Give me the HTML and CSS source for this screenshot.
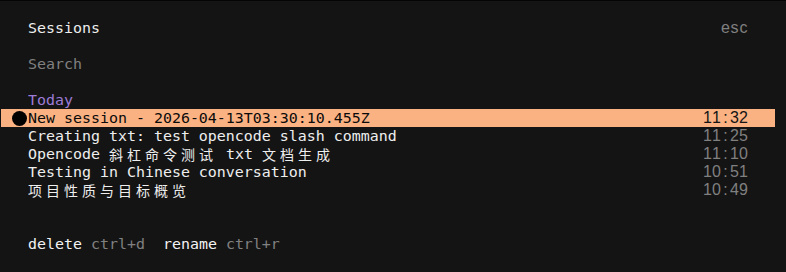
FILE: index.html
```html
<!DOCTYPE html>
<html>
<head>
<meta charset="utf-8">
<link rel="stylesheet" href="styles.css">
</head>
<body>
<div class="screen">
  <div class="row"></div>
  <div class="row"><span class="title">Sessions</span><span class="fill"></span><span class="sans dim"><span class="c">e</span><span class="c">s</span><span class="c">c</span></span></div>
  <div class="row"></div>
  <div class="row"><span class="dim">Search</span></div>
  <div class="row"></div>
  <div class="row"><span class="section">Today</span></div>
  <div class="row selected"><span class="bullet"><span class="dot"></span></span><span>New session - 2026-04-13T03:30:10.455Z</span><span class="fill"></span><span class="sans"><span class="c">1</span><span class="c">1</span><span class="c">:</span><span class="c">3</span><span class="c">2</span></span></div>
  <div class="row"><span>Creating txt: test opencode slash command</span><span class="fill"></span><span class="sans dim"><span class="c">1</span><span class="c">1</span><span class="c">:</span><span class="c">2</span><span class="c">5</span></span></div>
  <div class="row"><span>Opencode </span><span class="cjk">斜杠命令测试</span><span> txt </span><span class="cjk">文档生成</span><span class="fill"></span><span class="sans dim"><span class="c">1</span><span class="c">1</span><span class="c">:</span><span class="c">1</span><span class="c">0</span></span></div>
  <div class="row"><span>Testing in Chinese conversation</span><span class="fill"></span><span class="sans dim"><span class="c">1</span><span class="c">0</span><span class="c">:</span><span class="c">5</span><span class="c">1</span></span></div>
  <div class="row"><span class="cjk">项目性质与目标概览</span><span class="fill"></span><span class="sans dim"><span class="c">1</span><span class="c">0</span><span class="c">:</span><span class="c">4</span><span class="c">9</span></span></div>
  <div class="row"></div>
  <div class="row"></div>
  <div class="row"><span class="key">delete</span><span class="dim"> ctrl+d  </span><span class="key">rename</span><span class="dim"> ctrl+r</span></div>
  <div class="row"></div>
</div>
</body>
</html>
```

FILE: styles.css
```css
html, body {
  margin: 0;
  padding: 0;
  background: #141414;
}
.screen {
  width: 786px;
  height: 272px;
  box-sizing: border-box;
  border-top: 1px solid #050505;
  padding-left: 1px;
  background: #141414;
  font-family: "DejaVu Sans Mono", monospace;
  font-size: 14.95px;
  color: #eeeeee;
  overflow: hidden;
}
.row {
  display: flex;
  align-items: center;
  width: 774px;
  height: 18px;
  line-height: 18px;
  box-sizing: border-box;
  padding: 0 27px;
  white-space: pre;
  overflow: hidden;
}
.fill { flex: 1; }
.dim { color: #808080; }
.section { color: #9d7cd8; }
.title { color: #eeeeee; }
.key { color: #f2f2f2; }
.selected {
  background: #fab283;
  color: #0a0a0a;
  padding-left: 9px;
}
.selected .sans { color: #141414; }
.bullet {
  display: inline-flex;
  width: 18px;
  height: 18px;
  align-items: center;
  justify-content: center;
}
.dot {
  width: 15px;
  height: 15px;
  border-radius: 50%;
  background: #000;
}
.sans {
  display: inline-flex;
  font-family: "Liberation Sans", Arial, sans-serif;
  font-size: 16px;
}
.c {
  display: inline-block;
  width: 9px;
  text-align: center;
}
.cjk {
  display: inline-block;
  height: 18px;
  line-height: 18px;
  font-family: "Noto Sans CJK SC", sans-serif;
  font-size: 14px;
  letter-spacing: 4px;
}
```
